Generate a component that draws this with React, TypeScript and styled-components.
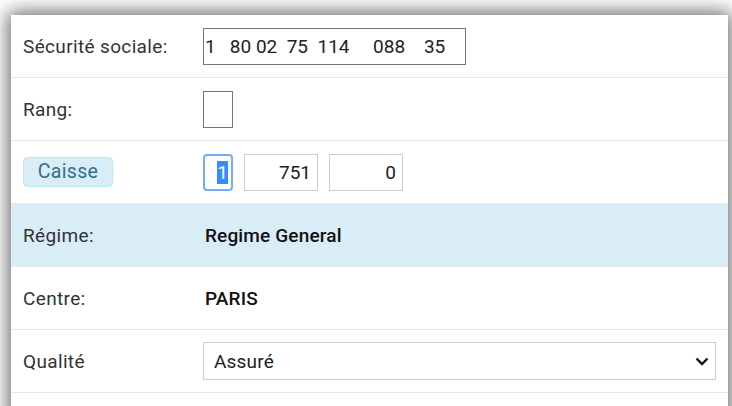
import React, { useEffect, useRef } from "react";
import styled, { createGlobalStyle } from "styled-components";

const GlobalStyle = createGlobalStyle`
  html, body {
    margin: 0;
    padding: 0;
    background: #ffffff;
    overflow: hidden;
  }
  body {
    font-family: Roboto, "Liberation Sans", Arial, sans-serif;
  }
`;

const Page = styled.div`
  padding: 15px 4px 0 11px;
  height: 406px;
  box-sizing: border-box;
`;

const Panel = styled.div`
  background: #ffffff;
  box-shadow: 0 0 18px 3px rgba(0, 0, 0, 0.6);
  min-height: 440px;
`;

const Row = styled.div<{ $info?: boolean }>`
  display: grid;
  grid-template-columns: 180px 1fr;
  align-items: center;
  height: 62px;
  padding: 0 12px;
  border-bottom: 1px solid #e8e8e8;
  background: ${(p) => (p.$info ? "#d9edf7" : "transparent")};
`;

const Label = styled.div`
  font-size: 19px;
  color: #333333;
  letter-spacing: 0.35px;
`;

const Badge = styled.span`
  display: inline-block;
  width: 90px;
  box-sizing: border-box;
  height: 30px;
  line-height: 28px;
  text-align: center;
  font-size: 19.5px;
  color: #31708f;
  background: #d9edf7;
  border: 1px solid #bce8f1;
  border-radius: 4px;
  letter-spacing: 0.35px;
`;

const Value = styled.div`
  padding-left: 2px;
  font-size: 19px;
  font-weight: 500;
  color: #111111;
  letter-spacing: 0.15px;
`;

const TextBox = styled.input<{ $w: number; $right?: boolean; $light?: boolean; $focused?: boolean }>`
  box-sizing: border-box;
  width: ${(p) => p.$w}px;
  height: 37px;
  font-family: Roboto, "Liberation Sans", Arial, sans-serif;
  font-size: 19px;
  color: #222222;
  background: #ffffff;
  padding: 0 ${(p) => (p.$right ? "6px" : "1px")};
  text-align: ${(p) => (p.$right ? "right" : "left")};
  white-space: pre;
  border: 1px solid ${(p) => (p.$light ? "#cccccc" : "#767676")};
  border-radius: 0;
  outline: none;
  ${(p) =>
    p.$focused &&
    `
    border: 2px solid #74adf5;
    border-radius: 4px;
    padding: 0 3px;
  `}
  &::selection {
    background: #338fff;
    color: #ffffff;
  }
`;

const Group = styled.div`
  display: flex;
  align-items: center;
  gap: 11px;
`;

const SelectWrap = styled.div`
  position: relative;
  width: 513px;
`;

const Select = styled.select`
  appearance: none;
  -webkit-appearance: none;
  width: 100%;
  height: 38px;
  box-sizing: border-box;
  border: 1px solid #cccccc;
  border-radius: 0;
  background: #ffffff;
  padding: 0 30px 0 10px;
  font-family: Roboto, "Liberation Sans", Arial, sans-serif;
  font-size: 19px;
  letter-spacing: 0.2px;
  color: #222222;
  outline: none;
`;

const Chevron = styled.svg`
  position: absolute;
  right: 7px;
  top: 15px;
  pointer-events: none;
`;

const SECU = "1   80 02  75  114     088    35";

export default function App() {
  const caisseRef = useRef<HTMLInputElement>(null);

  useEffect(() => {
    const el = caisseRef.current;
    if (el) {
      el.focus();
      el.select();
    }
  }, []);

  return (
    <>
      <GlobalStyle />
      <Page>
        <Panel>
          <Row>
            <Label>Sécurité sociale:</Label>
            <div>
              <TextBox $w={263} readOnly value={SECU} />
            </div>
          </Row>
          <Row>
            <Label>Rang:</Label>
            <div>
              <TextBox $w={30} readOnly value="" />
            </div>
          </Row>
          <Row>
            <div>
              <Badge>Caisse</Badge>
            </div>
            <Group>
              <TextBox ref={caisseRef} $w={30} $right $light $focused readOnly value="1" />
              <TextBox $w={74} $right $light readOnly value="751" />
              <TextBox $w={74} $right $light readOnly value="0" />
            </Group>
          </Row>
          <Row $info>
            <Label>Régime:</Label>
            <Value>Regime General</Value>
          </Row>
          <Row>
            <Label>Centre:</Label>
            <Value>PARIS</Value>
          </Row>
          <Row>
            <Label>Qualité</Label>
            <SelectWrap>
              <Select defaultValue="assure">
                <option value="assure">Assuré</option>
                <option value="conjoint">Conjoint</option>
                <option value="enfant">Enfant</option>
              </Select>
              <Chevron width="14" height="9" viewBox="0 0 14 9">
                <path d="M1.5 1.5 L7 7 L12.5 1.5" fill="none" stroke="#111" strokeWidth="2.4" />
              </Chevron>
            </SelectWrap>
          </Row>
          <Row />
        </Panel>
      </Page>
    </>
  );
}
